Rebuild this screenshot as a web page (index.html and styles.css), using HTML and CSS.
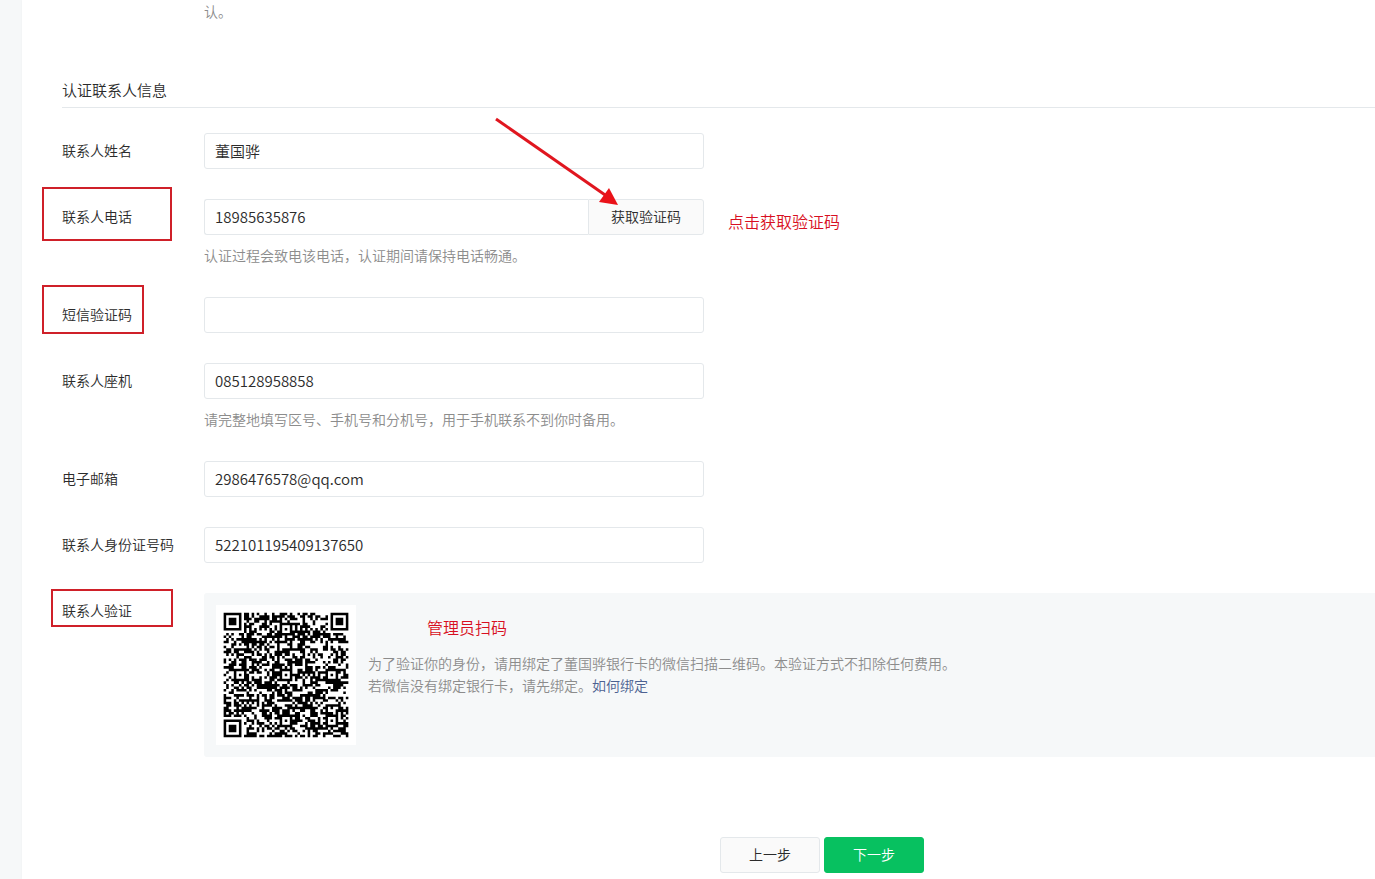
FILE: index.html
```html
<!DOCTYPE html>
<html lang="zh-CN">
<head>
    <meta charset="utf-8">
    <title>认证联系人信息</title>
    <link rel="stylesheet" href="styles.css">
</head>
<body>
    <main class="page">
        <p class="tips last-tips">认。</p>

        <h2 class="section-title">认证联系人信息</h2>

        <form class="form">
            <div class="row">
                <label class="label" for="name">联系人姓名</label>
                <div class="controls">
                    <input class="input" type="text" id="name" value="董国骅">
                </div>
            </div>

            <div class="row">
                <label class="label" for="phone">联系人电话</label>
                <div class="controls">
                    <div class="input-group">
                        <input class="input" type="text" id="phone" value="18985635876">
                        <button type="button" class="code-btn">获取验证码</button>
                    </div>
                    <p class="tips">认证过程会致电该电话，认证期间请保持电话畅通。</p>
                </div>
                <span class="mark mark-phone"></span>
                <span class="note note-phone">点击获取验证码</span>
                <svg class="arrow" width="130" height="94" viewBox="0 0 130 94">
                    <path d="M4 4 L116 82" stroke="#e0161f" stroke-width="3" fill="none"/>
                    <path d="M126 90 L117 73 L107 87 Z" fill="#ea1118"/>
                </svg>
            </div>

            <div class="row">
                <label class="label" for="sms">短信验证码</label>
                <div class="controls">
                    <input class="input" type="text" id="sms">
                </div>
                <span class="mark mark-sms"></span>
            </div>

            <div class="row">
                <label class="label" for="tel">联系人座机</label>
                <div class="controls">
                    <input class="input" type="text" id="tel" value="085128958858">
                    <p class="tips">请完整地填写区号、手机号和分机号，用于手机联系不到你时备用。</p>
                </div>
            </div>

            <div class="row">
                <label class="label" for="email">电子邮箱</label>
                <div class="controls">
                    <input class="input" type="text" id="email" value="2986476578@qq.com">
                </div>
            </div>

            <div class="row">
                <label class="label" for="idcard">联系人身份证号码</label>
                <div class="controls">
                    <input class="input" type="text" id="idcard" value="522101195409137650">
                </div>
            </div>

            <div class="row">
                <span class="label">联系人验证</span>
                <div class="verify">
                    <svg class="qrcode" viewBox="0 0 55 55">
                        <path id="qr" fill="#000"/>
                    </svg>
                    <div class="verify-text">
                        <p class="note note-scan">管理员扫码</p>
                        <p>为了验证你的身份，请用绑定了董国骅银行卡的微信扫描二维码。本验证方式不扣除任何费用。</p>
                        <p>若微信没有绑定银行卡，请先绑定。<a href="#">如何绑定</a></p>
                    </div>
                </div>
                <span class="mark mark-verify"></span>
            </div>

            <div class="actions">
                <button type="button" class="btn">上一步</button>
                <button type="button" class="btn btn-primary">下一步</button>
            </div>
        </form>
    </main>

    <script src="qr.js"></script>
</body>
</html>
```
FILE: styles.css
```css
body {
    margin: 0;
    background: #f6f8f9;
    color: #2b2b2b;
    font: 350 14px/22px "Noto Sans CJK SC", sans-serif;
    overflow: hidden;
}

p {
    margin: 0;
}

a {
    color: #4c6191;
    text-decoration: none;
}

.page {
    margin-left: 22px;
    padding: 0 0 6px 40px;
    background: #fff;
    box-shadow: 0 0 3px rgba(0, 0, 0, 0.04);
}

.tips {
    margin-top: 9px;
    padding-bottom: 1px;
    color: #8c8c8c;
}

.last-tips {
    margin: 0 0 56px 142px;
}

.section-title {
    margin: 0 0 25px;
    padding-bottom: 6px;
    border-bottom: 1px solid #e4e8eb;
    font-size: 15px;
    font-weight: inherit;
}

.row {
    position: relative;
    display: flex;
    margin-bottom: 30px;
}

.label {
    flex: none;
    width: 142px;
    line-height: 34px;
}

.controls {
    width: 500px;
}

.input,
.code-btn,
.btn {
    box-sizing: border-box;
    height: 36px;
    border: 1px solid #e4e8eb;
    border-radius: 3px;
    color: #2b2b2b;
    font-family: inherit;
    font-weight: inherit;
}

.input {
    display: block;
    width: 100%;
    padding: 0 10px 2px;
    background: #fff;
    font-size: 15px;
}

.input-group {
    display: flex;
}

.input-group .input {
    flex: 1;
    min-width: 0;
    border-right: 0;
    border-radius: 3px 0 0 3px;
}

.code-btn {
    width: 116px;
    padding: 0 0 2px;
    border-radius: 0 3px 3px 0;
    background: #fafafa;
    font-size: 14px;
}

.verify {
    flex: 1;
    display: flex;
    gap: 12px;
    padding: 12px;
    border-radius: 3px 0 0 3px;
    background: #f6f8f9;
    color: #8c8c8c;
}

.qrcode {
    flex: none;
    width: 140px;
    height: 140px;
    background: #fff;
}

.verify-text {
    padding-top: 11px;
}

.actions {
    display: flex;
    gap: 4px;
    margin-top: 80px;
    padding-left: 658px;
}

.btn {
    width: 100px;
    padding: 0 0 2px;
    background: #fafafa;
    font-size: 14px;
}

.btn-primary {
    border-color: #07c160;
    background: #07c160;
    color: #fff;
}

/* red guide marks on top of the form */
.mark {
    position: absolute;
    box-sizing: border-box;
    border: 2px solid #cf2029;
    pointer-events: none;
}

.mark-phone {
    left: -20px;
    top: -12px;
    width: 130px;
    height: 54px;
}

.mark-sms {
    left: -20px;
    top: -12px;
    width: 102px;
    height: 49px;
}

.mark-verify {
    left: -11px;
    top: -4px;
    width: 122px;
    height: 38px;
}

.note {
    color: #d80f22;
    font-size: 16px;
}

.note-phone {
    position: absolute;
    left: 666px;
    top: 11px;
}

.note-scan {
    margin: 0 0 14px 59px;
}

.arrow {
    position: absolute;
    left: 430px;
    top: -84px;
    pointer-events: none;
}
```
FILE: qr.js
```js
// 49 x 49 modules with a quiet zone of 3
const size = 49;
const margin = 3;
let seed = 20;

function random() {
    seed = (seed * 1103515245 + 12345) % 2147483648;
    return seed / 2147483648;
}

const grid = [];
for (let y = 0; y < size; y++) {
    grid.push([]);
    for (let x = 0; x < size; x++) {
        grid[y].push(random() < 0.54);
    }
}

// timing lines
for (let i = 0; i < size; i++) {
    grid[6][i] = i % 2 === 0;
    grid[i][6] = i % 2 === 0;
}

// concentric squares, ring at distance r is light when listed
function square(cx, cy, radius, light) {
    for (let y = cy - radius; y <= cy + radius; y++) {
        for (let x = cx - radius; x <= cx + radius; x++) {
            if (x < 0 || y < 0 || x >= size || y >= size) continue;
            const r = Math.max(Math.abs(x - cx), Math.abs(y - cy));
            grid[y][x] = !light.includes(r);
        }
    }
}

square(3, 3, 4, [2, 4]);
square(45, 3, 4, [2, 4]);
square(3, 45, 4, [2, 4]);
[[24, 6], [6, 24], [24, 24], [42, 24], [24, 42], [42, 42]].forEach(([x, y]) => square(x, y, 2, [1]));

let d = '';
grid.forEach((row, y) => row.forEach((dark, x) => {
    if (dark) d += `M${x + margin} ${y + margin}h1v1h-1z`;
}));
document.getElementById('qr').setAttribute('d', d);
```
